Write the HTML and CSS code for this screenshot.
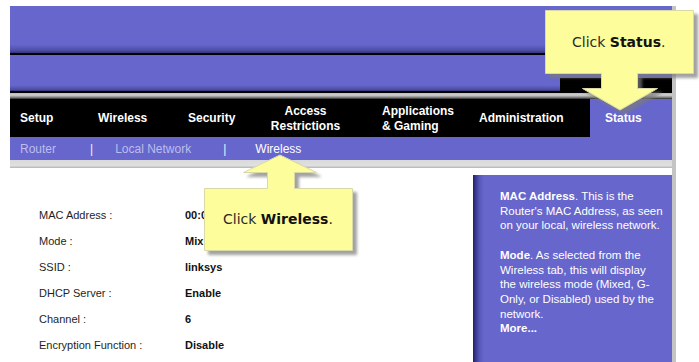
FILE: index.html
```html
<!DOCTYPE html>
<html>
<head>
<meta charset="utf-8">
<link rel="stylesheet" href="styles.css">
</head>
<body>
<div class="page">
  <div class="band1"></div>
  <div class="line"></div>
  <div class="band2"><div class="band2-box"></div></div>
  <div class="line"></div>
  <div class="grayband"></div>
  <nav class="nav">
    <div class="tab tab-setup">Setup</div>
    <div class="tab tab-wireless">Wireless</div>
    <div class="tab tab-security">Security</div>
    <div class="tab tab-access">Access<br>Restrictions</div>
    <div class="tab tab-apps">Applications<br>&amp; Gaming</div>
    <div class="tab tab-admin">Administration</div>
    <div class="tab tab-status">Status</div>
  </nav>
  <div class="subnav">
    <span class="sub sub-router">Router</span>
    <span class="pipe pipe-1">|</span>
    <span class="sub sub-local">Local Network</span>
    <span class="pipe pipe-2">|</span>
    <span class="sub sub-active">Wireless</span>
  </div>
  <div class="grayband2"></div>
  <div class="content">
    <div class="form">
      <div class="row"><span class="label">MAC Address :</span><span class="value">00:0</span></div>
      <div class="row"><span class="label">Mode :</span><span class="value">Mix</span></div>
      <div class="row"><span class="label">SSID :</span><span class="value">linksys</span></div>
      <div class="row"><span class="label">DHCP Server :</span><span class="value">Enable</span></div>
      <div class="row"><span class="label">Channel :</span><span class="value">6</span></div>
      <div class="row"><span class="label">Encryption Function :</span><span class="value">Disable</span></div>
    </div>
    <aside class="help">
      <p><b>MAC Address</b>. This is the Router's MAC Address, as seen on your local, wireless network.</p>
      <p><b>Mode</b>. As selected from the Wireless tab, this will display the wireless mode (Mixed, G-Only, or Disabled) used by the network.<br><b>More...</b></p>
    </aside>
  </div>
</div>

<svg class="callouts" width="699" height="362" viewBox="0 0 699 362" aria-hidden="true">
  <defs>
    <filter id="sh" x="-20%" y="-20%" width="140%" height="140%">
      <feDropShadow dx="4" dy="4" stdDeviation="1.4" flood-color="#7a7a7a" flood-opacity="0.7"/>
    </filter>
  </defs>
  <polygon filter="url(#sh)" fill="#fdfd9c" stroke="#d9d9a8" stroke-width="1"
    points="545.5,10.5 693.5,10.5 693.5,73.5 637.5,73.5 637.5,88.5 657.5,88.5 620,110 582.5,88.5 601.5,88.5 601.5,73.5 545.5,73.5"/>
  <polygon filter="url(#sh)" fill="#fdfd9c" stroke="#d9d9a8" stroke-width="1"
    points="280,155 316.5,172.5 294.5,172.5 294.5,188.5 352.5,188.5 352.5,250.5 204.5,250.5 204.5,188.5 267.5,188.5 267.5,172.5 243.5,172.5"/>
</svg>
<div class="callout-text callout-status">Click <b>Status</b>.</div>
<div class="callout-text callout-wireless">Click <b>Wireless</b>.</div>
</body>
</html>
```
FILE: styles.css
```css
html, body {
  margin: 0;
  padding: 0;
  background: #ffffff;
  overflow: hidden;
}
body {
  font-family: "Liberation Sans", Arial, sans-serif;
  position: relative;
  width: 699px;
  height: 362px;
}
.page {
  margin: 6px 0 0 10px;
  width: 662px;
  border-right: 4px solid #c4c4c4;
}
.band1 {
  height: 47px;
  background: linear-gradient(#6666cc 0, #6666cc 82%, #4f4fa8 94%, #34347e 100%);
}
.line {
  height: 2px;
  background: #000;
}
.band2 {
  height: 36px;
  background: linear-gradient(#6666cc 0, #6666cc 84%, #4c4ca2 96%, #333377 100%);
  display: flex;
  justify-content: flex-end;
  align-items: flex-end;
}
.band2-box {
  width: 112px;
  height: 13px;
  background: #000;
}
.grayband {
  height: 6px;
  background: linear-gradient(#b8b8b8 0, #d2d2d2 35%, #8a8a8a 70%, #2a2a2a 100%);
}
.nav {
  height: 38px;
  background: #000;
  color: #fff;
  font-weight: bold;
  font-size: 12px;
  line-height: 15px;
  display: grid;
  grid-template-columns: 78px 82px 85px 105px 110px 120px 82px;
}
.tab {
  display: flex;
  align-items: center;
  padding-top: 1px;
}
.tab-setup { padding-left: 10px; }
.tab-wireless { padding-left: 10px; }
.tab-security { padding-left: 18px; }
.tab-access { justify-content: center; text-align: center; padding-right: 4px; }
.tab-apps { padding-left: 22px; }
.tab-admin { padding-left: 9px; }
.tab-status { padding-left: 15px; background: #6666cc; }
.subnav {
  height: 23px;
  background: #6666cc;
  display: flex;
  align-items: center;
  font-size: 12px;
  color: #bdbdee;
  padding-left: 10px;
}
.pipe { color: #f2f2ff; }
.pipe-1 { margin-left: 34px; }
.sub-local { margin-left: 22px; }
.pipe-2 { margin-left: 32px; }
.sub-active { margin-left: 29px; color: #fff; }
.grayband2 {
  height: 8px;
  background: linear-gradient(#d9d9d9 0, #e0e0e0 70%, #b4b4b4 100%);
}
.content {
  display: flex;
  justify-content: space-between;
  height: 194px;
  overflow: hidden;
}
.form {
  padding: 34px 0 0 29px;
  font-size: 11px;
  color: #1e1e1e;
}
.row {
  display: flex;
  height: 26px;
  align-items: center;
}
.label { width: 146px; }
.value { font-weight: bold; color: #111; }
.help {
  margin-top: 7px;
  width: 164px;
  padding: 14px 8px 0 27px;
  background: linear-gradient(to right, #20205e 0, #3a3a94 3px, #5a5abd 7px, #6666cc 11px);
  color: #fff;
  font-size: 11.5px;
  line-height: 14.7px;
}
.help p { margin: 0 0 14.7px 0; }
.callouts {
  position: absolute;
  left: 0;
  top: 0;
  pointer-events: none;
}
.callout-text {
  position: absolute;
  font-family: "DejaVu Sans", Verdana, sans-serif;
  font-size: 14px;
  color: #2a2a2a;
  white-space: nowrap;
}
.callout-text b { color: #111; }
.callout-status { left: 572px; top: 34px; }
.callout-wireless { left: 223px; top: 211px; }
```
